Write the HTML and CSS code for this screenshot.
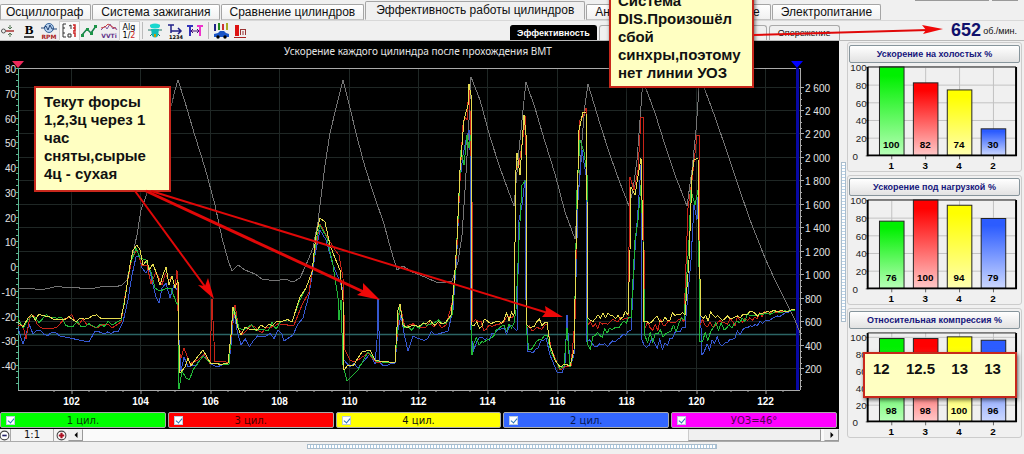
FILE: index.html
```html
<!DOCTYPE html>
<html lang="ru">
<head>
<meta charset="utf-8">
<title>Эффективность работы цилиндров</title>
<link rel="stylesheet" href="styles.css">
</head>
<body>
<div class="app">
  <nav class="tabs" role="tablist">
    <button class="tab" role="tab">Осциллограф</button>
    <button class="tab" role="tab">Система зажигания</button>
    <button class="tab" role="tab">Сравнение цилиндров</button>
    <button class="tab tab-active" role="tab" aria-selected="true">Эффективность работы цилиндров</button>
    <button class="tab" role="tab">Анализ давления в цилиндре</button>
    <button class="tab" role="tab">Электропитание</button>
    <div class="window-edge"><span></span><span></span></div>
  </nav>

  <div class="toolbar">
    <div class="tools">
      <button class="tool" aria-label="Смещение"><svg viewBox="0 0 18 18"><circle cx="3.5" cy="9" r="2" fill="none" stroke="#555"/><path d="M6 9h8" stroke="#a33" stroke-width="1.5"/><path d="M10 3v4M10 15v-4M8 5l2 2 2-2M8 13l2-2 2 2" stroke="#575" fill="none"/></svg></button>
      <button class="tool" aria-label="Жирный"><svg viewBox="0 0 18 18"><text x="9" y="12" class="icon-b">B</text><path d="M4 15h10" stroke="#111" stroke-width="1.5"/></svg></button>
      <button class="tool" aria-label="RPM"><svg viewBox="0 0 18 18"><circle cx="9" cy="6" r="4.5" fill="#b9d2ee" stroke="#36649a"/><path d="M1 6h3l2-2 2 4 2-5 2 4h5" fill="none" stroke="#247"/><text x="9" y="17" class="icon-t icon-red">RPM</text></svg></button>
      <button class="tool tool-on" aria-label="Шкала"><svg viewBox="0 0 18 18"><path d="M6 2H3v13h3M3 6h2M3 11h2" fill="none" stroke="#333"/><path d="M9 4l2-1v4M8 12h3v3H8z" fill="none" stroke="#333"/><path d="M13 3h2v3h-2M15 6v3h-2M13 11h2v4" fill="none" stroke="#c22" stroke-width="1.5"/></svg></button>
      <button class="tool" aria-label="График"><svg viewBox="0 0 18 18"><path d="M2 13l5-6 4 4 5-7" fill="none" stroke="#16804a" stroke-width="1.5"/><path d="M1 12h3v3H1zM6 6h3v3H6zM10 10h3v3h-3zM14 3h3v3h-3z" fill="#1d9448"/></svg></button>
      <button class="tool" aria-label="VVTi"><svg viewBox="0 0 18 18"><path d="M1 8l4-4 2 3 3-5 3 5 2-2 2 3" fill="none" stroke="#8250a0"/><path d="M1 6l4-1 3-3 3 2 5 3" fill="none" stroke="#c44"/><text x="9" y="16" class="icon-t icon-purple">VVTi</text></svg></button>
      <button class="tool tool-on" aria-label="Алгоритм 1/2"><svg viewBox="0 0 18 18"><text x="9" y="8" class="icon-a">Alg</text><text x="9" y="16" class="icon-a">1/<tspan fill="#c22">2</tspan></text></svg></button>
      <i class="sep"></i>
      <button class="tool" aria-label="Датчик"><svg viewBox="0 0 18 18"><path d="M4 3l3 2M14 3l-3 2M2 8h4M16 8h-4M4 14l3-3M14 14l-3-3" stroke="#276"/><ellipse cx="9" cy="4" rx="5" ry="2.5" fill="#19d8cf"/><path d="M5 7h8l-1 7q-3 3-6 0z" fill="#12bcb6"/><path d="M8 12h2v3H8z" fill="#c90"/></svg></button>
      <button class="tool" aria-label="1234"><svg viewBox="0 0 18 18"><path d="M2 3h6M5 3v8M5 9h10M12 6l3 3-3 3" fill="none" stroke="#228" stroke-width="1.5"/><text x="10" y="17" class="icon-t icon-n">1234</text></svg></button>
      <button class="tool" aria-label="Интервал"><svg viewBox="0 0 18 18"><path d="M1 4h6M4 4v10" stroke="#33b" stroke-width="2"/><path d="M11 4h6M14 4v10" stroke="#e3c" stroke-width="2"/><path d="M5 9h8M7 7L5 9l2 2M11 7l2 2-2 2" fill="none" stroke="#417"/></svg></button>
      <i class="sep"></i>
      <button class="tool" aria-label="Автомобиль"><svg viewBox="0 0 18 18"><path d="M3 2v7" stroke="#228" stroke-width="2"/><path d="M7 1v7" stroke="#282" stroke-width="2"/><path d="M11 2v6" stroke="#c33" stroke-width="2"/><path d="M15 1v7" stroke="#aa2" stroke-width="2"/><path d="M2 12l4-1 2-2h4l2 2 3 1v3H2z" fill="#1a55c8"/><circle cx="6" cy="15" r="1.7"/><circle cx="13" cy="15" r="1.7"/></svg></button>
      <button class="tool" aria-label="Отчёт"><svg viewBox="0 0 18 18"><path d="M3 3h4v11H3z" fill="#d11"/><path d="M2 15.500h12" stroke="#a22"/><path d="M8 7.500h6M8.500 7v6M11 9v4M13.500 7v6" fill="none" stroke="#933"/></svg></button>
    </div>
    <div class="subtabs" role="tablist">
      <button class="subtab subtab-active" role="tab" aria-selected="true">Эффективность</button>
      <button class="subtab subtab-wide" role="tab" aria-label="Обороты"></button>
      <button class="subtab" role="tab">Опережение</button>
    </div>
    <div class="rpm"><b>652</b><span>об./мин.</span></div>
  </div>

  <main class="work">
    <section class="scope">
      <svg class="plot" id="plot" viewBox="0 41 839 369" role="img" aria-label="Ускорение каждого цилиндра">
        <rect y="41" width="839" height="369"/>
        <text class="plot-title" x="418" y="55">Ускорение каждого цилиндра после прохождения ВМТ</text>
      </svg>
      <div class="legend">
        <label class="ch ch-1"><input type="checkbox" checked><span>1 цил.</span></label>
        <label class="ch ch-3"><input type="checkbox" checked><span>3 цил.</span></label>
        <label class="ch ch-4"><input type="checkbox" checked><span>4 цил.</span></label>
        <label class="ch ch-2"><input type="checkbox" checked><span>2 цил.</span></label>
        <label class="ch ch-u"><input type="checkbox" checked><span>УОЗ=46°</span></label>
      </div>
      <div class="scroll">
        <button class="zoom" aria-label="Уменьшить"><svg viewBox="0 0 10 10"><circle cx="5" cy="5" r="4" fill="#fff" stroke="#444"/><path d="M3 5h4" stroke="#226" stroke-width="1.5"/></svg></button>
        <button class="ratio">1:1</button>
        <button class="zoom" aria-label="Увеличить"><svg viewBox="0 0 10 10"><circle cx="5" cy="5" r="4" fill="#fff" stroke="#444"/><path d="M2.500 5h5M5 2.500v5" stroke="#a12" stroke-width="2"/></svg></button>
        <button class="arrow" aria-label="Влево"><svg viewBox="0 0 6 6"><path d="M4.500 0v6l-3-3z"/></svg></button>
        <div class="track"><div class="thumb"></div></div>
        <button class="arrow" aria-label="Вправо"><svg viewBox="0 0 6 6"><path d="M1.500 0v6l3-3z"/></svg></button>
      </div>
    </section>
    <div class="vsplit"><i></i></div>
    <aside class="side">
      <section class="panel"><button class="panel-title">Ускорение на холостых %</button><svg class="bars" viewBox="0 0 174 110" data-values="100,82,74,30"></svg></section>
      <section class="panel"><button class="panel-title">Ускорение под нагрузкой %</button><svg class="bars" viewBox="0 0 174 110" data-values="76,100,94,79"></svg></section>
      <section class="panel"><button class="panel-title">Относительная компрессия %</button><svg class="bars" viewBox="0 0 174 110" data-values="98,98,100,96" data-headroom="4"></svg></section>
    </aside>
  </main>
  <footer class="hsplit"><i></i></footer>

  <div class="note note-leak">Текут форсы<br>1,2,3ц через 1<br>час<br>сняты,сырые<br>4ц - сухая</div>
  <div class="note note-dis">Система<br>DIS.Произошёл<br>сбой<br>синхры,поэтому<br>нет линии УОЗ</div>
  <div class="note note-comp"><span>12</span><span>12.5</span><span>13</span><span>13</span></div>
  <svg class="arrows" viewBox="0 0 1024 454" aria-hidden="true">
    <g stroke="#e00808" stroke-width="2">
      <path d="M135 191L206 288"/><path d="M146 191L366 293" stroke-width="3"/><path d="M151 191L548 313"/><path d="M754 35L928 30"/>
    </g>
    <g fill="#f00808"><path d="M214 299L198 285L205 286L208 278z"/><path d="M380 300L357 295L363 291L363 283z"/><path d="M563 317L542 317L546 312L545 306z"/><path d="M943 29L923 34L926 30L922 25z"/></g>
  </svg>
</div>
<script src="chart.js"></script>
</body>
</html>
```
FILE: styles.css
```css
* { box-sizing: border-box; }
body { margin: 0; background: #f0f0f0; font-family: "Liberation Sans", Arial, sans-serif; color: #111; }
button { font: inherit; color: inherit; padding: 0; margin: 0; border: 0; background: none; white-space: nowrap; }
.app { position: relative; min-height: 100vh; overflow: hidden; display: flex; flex-direction: column; }

.tabs { display: flex; align-items: flex-end; height: 21px; gap: 1px; border-bottom: 1px solid #d8d8d8; font-size: 12px; }
.tab { height: 16px; line-height: 15px; padding: 0 8px; border: 1px solid #a5a5a5; border-bottom-color: #c4c4c4; border-radius: 2px 2px 0 0; background: linear-gradient(#fff, #f1f1f1); }
.tab:first-child { padding: 0 7px 0 5px; }
.tab-active { height: 19px; line-height: 17px; padding: 0 10px; background: #f0f0f0; border-bottom-color: #f0f0f0; }
.tab-active + .tab { padding: 0 10px 0 8px; }
.window-edge { display: flex; gap: 3px; align-self: flex-start; margin-left: auto; padding-right: 6px; }
.window-edge span { width: 74px; height: 1px; background: #999; }
.window-edge span + span { width: 26px; }

.toolbar { display: flex; align-items: stretch; height: 20px; border-bottom: 1px solid #bbb; }
.tools { display: flex; align-items: center; gap: 1px; flex: 0 0 510px; }
.tool { width: 19px; height: 18px; }
.tool svg { display: block; width: 18px; height: 18px; }
.tool-on { background: #fafafa; outline: 1px solid #d0d0d0; }
.sep { width: 1px; height: 17px; background: #bbb; margin: 0 2px; }
.icon-b { font: bold 13px "Liberation Serif", serif; text-anchor: middle; }
.icon-a { font: 8px "DejaVu Sans", sans-serif; text-anchor: middle; }
.icon-t { font: bold 6px "DejaVu Sans", sans-serif; text-anchor: middle; }
.icon-n { font-size: 5px; }
.icon-red { fill: #a22; }
.icon-purple { fill: #63358a; }
.subtabs { display: flex; align-items: flex-end; gap: 2px; }
.subtab { height: 15px; padding: 0 8px; font-size: 9px; line-height: 13px; border: 1px solid #aaa; border-bottom: 0; border-radius: 3px 3px 0 0; }
.subtab-active { background: #000; color: #fff; border-color: #000; font-weight: bold; padding: 0 6px; }
.subtab-wide { width: 168px; }
.rpm { display: flex; align-items: center; gap: 2px; margin-left: auto; padding-right: 7px; font-size: 9px; }
.rpm b { font-size: 18px; color: #10106c; }

.work { display: flex; align-items: flex-start; }
.scope { flex: 1; min-width: 0; background: #000; }
.plot { display: block; width: 100%; height: auto; }
.plot-title { font: 10px "Noto Sans", sans-serif; fill: #e4e4e4; text-anchor: middle; }
.axis { font-size: 10px; fill: #e4e4e4; }
.axis-left { text-anchor: end; }
.axis-x { font-weight: bold; text-anchor: middle; fill: #fff; }
.grid { stroke: #1f2725; fill: none; }
.tick { stroke: #aaa; fill: none; }
.trace { fill: none; stroke-width: 1; stroke-linejoin: round; shape-rendering: crispEdges; }
.trace-rpm { stroke: #747474; }
.trace-1 { stroke: #22b838; }
.trace-3 { stroke: #c82418; }
.trace-4 { stroke: #e6dc50; }
.trace-2 { stroke: #3658d0; }

.legend { display: flex; gap: 2px; padding: 2px 2px 1px 0; font: 10px "DejaVu Sans", sans-serif; }
.ch { position: relative; flex: 1; height: 16px; display: flex; align-items: center; justify-content: center; border: 1px solid #aaa; border-radius: 2px; }
.ch input { appearance: none; position: absolute; left: 5px; top: 3px; width: 9px; height: 9px; margin: 0; background: #fff; border: 1px solid #bcd; }
.ch input:checked::after { content: ""; position: absolute; left: 2px; top: 0; width: 3px; height: 5px; border: solid #2874b8; border-width: 0 1px 1px 0; transform: rotate(40deg); }
.ch-1 { background: #0f0; color: #064006; }
.ch-3 { background: #f00; color: #400; }
.ch-4 { background: #ff0; }
.ch-2 { background: #36f; color: #081850; }
.ch-u { background: #f0f; color: #500050; }

.scroll { display: flex; align-items: stretch; height: 13px; background: #f4f4f4; border-bottom: 1px solid #aaa; }
.zoom { width: 12px; }
.zoom svg { display: block; width: 11px; height: 11px; }
.zoom:first-child { width: 10px; margin-left: -1px; }
.ratio { width: 44px; font: 10px/12px "DejaVu Sans", sans-serif; border: 1px solid #aaa; border-width: 0 1px; margin: 0 2px 0 1px; }
.arrow { width: 15px; display: grid; place-items: center; border: 1px solid #999; border-top-color: #eee; border-left-color: #eee; background: #f0f0f0; }
.arrow svg { width: 6px; height: 6px; }
.track { flex: 1; display: flex; justify-content: flex-end; padding-right: 3px; background: #fafafa; }
.thumb { width: 18%; background: #f0f0f0; border: 1px solid #999; border-top-color: #ddd; border-left-color: #ccc; }

.vsplit { width: 8px; align-self: stretch; display: flex; justify-content: center; align-items: center; }
.vsplit i { width: 5px; height: 160px; border: 1px solid #a9bccb; background: repeating-linear-gradient(#fff 0 2px, #b9d2e8 2px 3px); }
.side { flex: 0 0 177px; display: flex; flex-direction: column; gap: 3px; padding: 1px 2px 0 0; margin-bottom: -4px; }
.panel { border: 1px solid #ccc; border-radius: 3px; padding: 2px 1px 0; }
.panel-title { display: block; width: 100%; height: 18px; font-size: 9px; font-weight: bold; color: #15157c; border: 1px solid #87959c; border-radius: 2px; background: linear-gradient(#fff, #e2e2e2); }
.bars { display: block; width: 100%; height: auto; font-size: 10px; }
.bar-axis { fill: #222; text-anchor: end; }
.bar-num { font-weight: bold; text-anchor: middle; }
.bar-grid { stroke: #c2c2c2; fill: none; }

.hsplit { display: flex; justify-content: center; padding-top: 2px; }
.hsplit i { width: 40%; height: 5px; border: 1px solid #a9bccb; background: repeating-linear-gradient(90deg, #fff 0 2px, #a9c8e0 2px 3px); }

.note { position: absolute; background: #ffffc2; border: 2px solid #c8281c; box-shadow: 1px 2px 4px #0009; color: #111; font-size: 15px; line-height: 18px; font-weight: bold; white-space: nowrap; }
.note-leak { left: 34px; top: 86px; width: 137px; padding: 5px 8px 7px; }
.note-dis { left: 609px; top: -16px; width: 145px; padding: 6px 7px 4px; }
.note-comp { left: 863px; top: 352px; width: 154px; height: 46px; padding: 6px 14px 0 8px; display: flex; justify-content: space-between; }
.arrows { position: absolute; left: 0; top: 0; width: 1024px; height: 454px; pointer-events: none; }
```
FILE: chart.js
```js
const NS = "http://www.w3.org/2000/svg";
function add(parent, tag, attrs, text) {
  const el = document.createElementNS(NS, tag);
  for (const k in attrs) el.setAttribute(k, attrs[k]);
  if (text !== undefined) el.textContent = text;
  parent.appendChild(el);
  return el;
}

// Main plot: axes and grid
const plot = document.getElementById("plot");
let grid = "", ticks = "";
for (let i = 0; i <= 10; i++) {
  const x = Math.round(71 + i * 69.4) + 0.5;
  grid += `M${x} 68V390`;
  for (let k = -1; k < 3; k++) if (x + k * 17.3 < 800) ticks += `M${Math.round(x + k * 17.3)} 390v${k ? 2 : 4}`;
  add(plot, "text", { x, y: 405, class: "axis axis-x" }, 102 + i * 2);
}
for (let i = 0; i <= 12; i++) {
  const y = Math.round(86.5 + i * 23.46) + 0.5;
  grid += `M18 ${y}H800`;
  ticks += `M800 ${y}h4`;
  for (let k = 1; k < 4; k++) ticks += `M800 ${y + k * 6}h2`;
  const v = String(2600 - i * 200).replace(/(\d)(\d{3})$/, "$1 $2");
  add(plot, "text", { x: 805, y: y + 4, class: "axis" }, v);
}
let left = "";
for (let i = 0; i <= 12; i++) {
  const y = Math.round(68 + i * 24.75) + 0.5;
  left += `M18 ${y}h-3`;
  for (let k = 1; k < 4; k++) left += `M18 ${y + k * 6}h-2`;
  add(plot, "text", { x: 16, y: y + 4, class: "axis axis-left" }, 80 - i * 10);
}
add(plot, "path", { d: grid, class: "grid" });
add(plot, "path", { d: ticks + "M18 68.500H800M800.500 68V390M18 390.500H800", class: "tick" });
add(plot, "path", { d: left + "M18.500 68V390", stroke: "#5db894", fill: "none" });
add(plot, "path", { d: "M18 334.500H800", stroke: "#2b6464", "stroke-width": 1.5 });
add(plot, "path", { d: "M797.500 68V390", stroke: "#0808a4", "stroke-width": 3 });
add(plot, "path", { d: "M12 61H24L18 68z", fill: "#ee2a5c" });
add(plot, "path", { d: "M791 61H803L797 68z", fill: "#0000ff" });

// Traces: "x,y" is a vertex, "x,y,a" is a noisy run of amplitude a up to that vertex
function path(spec, seed) {
  let px, py, d = "";
  const rnd = () => (seed = (seed * 16807) % 2147483647) / 2147483647 - 0.5;
  for (const item of spec.trim().split(/\s+/)) {
    const [x, y, a] = item.split(",").map(Number);
    if (a) {
      const n = Math.max(1, Math.round((x - px) / (x > 470 ? 2.5 : 4)));
      for (let i = 1; i < n; i++) {
        d += `L${(px + (x - px) * i / n).toFixed(1)} ${(py + (y - py) * i / n + rnd() * 2 * a).toFixed(1)}`;
      }
    }
    d += `${d ? "L" : "M"}${x} ${y}`;
    px = x; py = y;
  }
  return d;
}
const traces = {
  rpm: `18,288 30,288 40,290 50,288 58,286 66,288 75,287 84,289 95,288 105,286 115,287 122,285 127,280 132,258 137,235
    141,210 147,193 155,160 165,123 172,103 175,90 178,80 185,102 195,136 205,168 215,205 222,238 228,260 232,271 238,265
    245,270 255,274 262,279 275,281 285,279 293,282 300,278 306,265 313,248 318,222 320,205 325,165 330,133 336,108 343,80
    350,108 357,137 365,167 374,195 384,224 391,250 397,270 403,266 412,272 425,277 438,283 446,282 452,281 458,262 462,235
    465,190 468,140 470,100 471,77 480,100 490,137 500,168 508,190 514,206 519,150 523,110 526,82 535,108 545,142 555,174
    565,212 575,239 578,200 582,140 585,105 588,84 600,124 610,155 620,183 629,206 633,190 637,160 640,120 643,78 645,86
    655,113 665,145 675,175 687,206 692,170 696,130 699,88 701,78 705,90 715,117 727,152 738,185 750,220 765,258 775,280
    785,300 795,320 800,333`,
  2: `18,328 23,344 29,324 33,334 52,332,4 60,336,3 89,342 95,331 104,334,3 118,332,2 123,322 128,300 132,275 136,257 139,256
    142,268 146,273 149,267 153,285 156,297 159,303 162,288 178,292,10 179,340 181,371 184,357 188,367 196,365,5 204,355 211,364
    217,367 229,364,1 231,345 234,312 237,330 241,345 266,336,5 282,334,5 284,341 293,335 298,324 303,318 309,295 315,255 320,230
    326,240 333,265 340,282 343,290 344,360 350,367 358,368,5 370,354 375,364 377,340 378,299 380,362 383,366 395,363,1 398,330
    401,315 404,333 408,351 413,336 435,335,5 448,331 453,310 457,250 460,180 463,155 466,140 469,130 470,150 471,330 473,352
    477,341 514,328,4 517,331 519,220 522,205 525,180 526,300 528,352 546,338,5 550,355 557,372 562,373 565,364 567,315 570,366
    574,355 578,200 582,150 586,175 587,342 615,342,5 631,330,2 635,250 638,210 641,165 642,340 644,345 665,343,7 685,328,4
    691,260 694,205 697,220 699,175 700,300 702,355 712,340,8 725,343,5 745,328,4 770,320,2 795,309,1`,
  1: `18,318 23,328 28,320 50,318,4 85,327,4 112,325,4 121,320 125,298 130,265 136,248 140,258 146,260 151,272 155,288 171,288,7
    176,302 178,305 179,389 182,371 186,378 193,370,6 203,356 211,364 229,364,1 232,320 234,308 239,328 260,329,4 292,322,4
    299,302 306,288 312,272 316,240 320,225 327,238 333,265 338,298 339,320 341,300 343,365 347,381 353,375 358,370 368,352
    377,362 395,362,1 398,320 400,306 404,328 446,323,4 452,315 455,275 458,220 461,150 464,165 467,135 469,148 471,135
    472,355 474,343 514,323,5 516,310 519,240 522,185 526,180 527,335 529,350 547,335,5 551,352 560,369 564,366 567,328 570,367
    574,350 577,190 580,140 584,152 587,175 588,345 612,330,7 631,318,3 635,240 638,220 641,185 643,240 645,336 663,337,7
    684,320,5 689,240 691,190 695,205 698,190 700,342 713,328,8 724,330,7 750,316,4 795,310,1`,
  3: `18,325 23,326 26,339 30,317 48,329,5 68,318,4 90,325,5 112,328,4 121,322 126,290 132,258 137,250 142,266 147,265 151,284
    156,272 162,285 172,276,10 175,288 177,270 179,350 181,358 184,348 190,364 198,360,4 204,354 210,364 212,299 215,362
    229,363,1 232,325 235,305 239,330 266,328,5 294,325,4 302,305 309,292 315,250 320,224 329,240 335,250 339,255 343,278
    345,350 350,360 358,360,5 368,353 376,362 395,362,1 398,325 400,306 405,327 446,325,4 453,300 457,245 461,160 463,125
    465,117 467,120 469,84 470,110 472,200 473,322 489,325,7 514,316,4 516,170 519,165 524,130 525,115 526,155 527,328
    547,324,6 551,348 560,370 565,367 571,366 575,320 577,200 580,120 583,117 586,108 587,200 588,325 605,323,9 628,318,3
    630,177 634,190 638,170 641,117 643,117 644,250 645,328 663,325,7 684,322,4 688,208 692,180 697,135 699,135 700,325
    715,326,6 740,320,5 767,313,4 795,310,1`,
  4: `18,322 23,327 28,318 50,317,4 80,318,4 105,319,4 121,318 124,305 127,285 130,265 133,250 137,245 140,250 143,265 147,260
    149,270 153,264 157,275 160,285 163,275 166,267 169,285 172,276 175,288 178,280 179,345 180,373 185,367 188,358 191,366
    195,360 199,355 203,350 207,357 211,364 228,363,1 231,335 233,307 235,315 238,328 241,335 245,327 265,328,3 292,322,4
    300,297 306,288 312,272 316,235 320,218 325,222 330,245 335,258 340,270 343,300 344,370 348,365 353,366 358,358 362,352
    370,350 375,360 383,362 395,362,1 398,310 400,304 403,325 446,322,4 451,315 454,285 457,240 460,170 464,120 468,105
    469,84 471,95 472,325 514,316,5 516,170 517,153 520,175 524,115 526,135 527,325 547,322,5 550,345 555,360 560,367 565,364
    570,366 574,350 576,250 579,130 583,112 586,112 587,200 588,318 628,315,4 630,250 631,187 635,195 639,170 641,158 643,240
    644,322 665,317,5 685,315,4 689,260 692,175 694,160 698,158 699,240 701,316 720,318,6 760,313,3 795,310,1`
};
["rpm", "2", "3", "1", "4"].forEach((k, i) =>
  add(plot, "path", { d: path(traces[k], 7919 + i * 331), class: "trace trace-" + k }));

// Side bar charts
const fills = [["1", "#00f000", "#b8ffb8"], ["3", "#ff0000", "#ffc8c8"], ["4", "#ffff00", "#ffffb0"], ["2", "#2c5cff", "#ccd8ff"]];
document.querySelectorAll(".bars").forEach((svg, n) => {
  const values = svg.dataset.values.split(",").map(Number);
  const head = Number(svg.dataset.headroom || 0);
  const top = 4, bottom = 94, h = bottom - top - head;
  const defs = add(svg, "defs", {});
  let g = "", t = "";
  for (let v = 0; v <= 100; v += 20) {
    const y = Math.round(bottom - h * v / 100) + 0.5;
    g += `M20 ${y}H170`;
    t += `M17 ${y}h3`;
    add(svg, "text", { x: v ? 18 : 9, y: y + 4, class: "bar-axis" }, v);
  }
  values.forEach((v, i) => { g += `M${43.5 + i * 34.5} ${top}V${bottom}`; t += `M${43.5 + i * 34.5} ${bottom}v4`; });
  add(svg, "path", { d: g, class: "bar-grid" });
  add(svg, "path", { d: t, stroke: "#666" });
  values.forEach((v, i) => {
    const [name, a, b] = fills[i], id = `fill-${n}-${i}`, x = 31 + i * 34.5, bh = h * v / 100;
    const lg = add(defs, "linearGradient", { id, x1: 0, y1: 0, x2: 0, y2: 1 });
    add(lg, "stop", { offset: "0.1", "stop-color": a });
    add(lg, "stop", { offset: "1", "stop-color": b });
    add(svg, "rect", { x, y: bottom - bh, width: 25, height: bh, fill: `url(#${id})`, stroke: "#222" });
    add(svg, "text", { x: x + 12, y: 87, class: "bar-num" }, v);
    add(svg, "text", { x: x + 12, y: 108, class: "bar-num" }, name);
  });
  add(svg, "path", { d: `M19 ${top}V${bottom}H170V${top}`, fill: "none", stroke: "#000", "stroke-width": 2 });
  add(svg, "path", { d: `M19 ${top}H170`, stroke: "#222" });
});
```
